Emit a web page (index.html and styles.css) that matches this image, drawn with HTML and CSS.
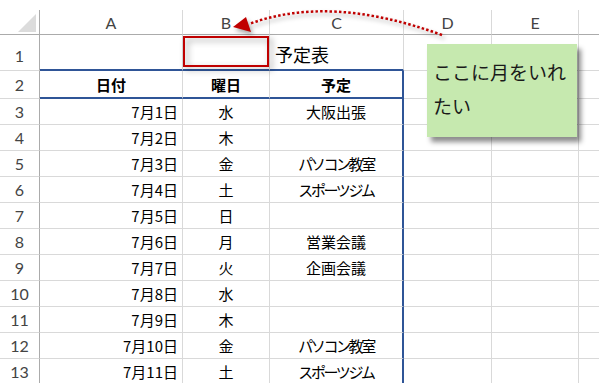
FILE: index.html
```html
<!DOCTYPE html>
<html>
<head>
<meta charset="utf-8">
<title>予定表</title>
<link rel="stylesheet" href="styles.css">
</head>
<body>

<div class="sheet">
  <div class="grid">
    <!-- column letters -->
    <div class="row">
      <div class="cell corner"><span class="tri"></span></div>
      <div class="cell col-head">A</div>
      <div class="cell col-head">B</div>
      <div class="cell col-head">C</div>
      <div class="cell col-head">D</div>
      <div class="cell col-head">E</div>
      <div class="cell col-head last"></div>
    </div>

    <div class="row">
      <div class="cell row-head first">1</div>
      <div class="cell t-top"></div>
      <div class="cell t-top target"><span class="mark"></span></div>
      <div class="cell t-top title">予定表</div>
      <div class="cell"></div>
      <div class="cell"></div>
      <div class="cell last"></div>
    </div>

    <div class="row">
      <div class="cell row-head">2</div>
      <div class="cell t-top head">日付</div>
      <div class="cell t-top head">曜日</div>
      <div class="cell t-top t-right head">予定</div>
      <div class="cell"></div>
      <div class="cell"></div>
      <div class="cell last"></div>
    </div>

    <div class="row">
      <div class="cell row-head">3</div>
      <div class="cell num">7月1日</div>
      <div class="cell mid">水</div>
      <div class="cell mid t-right">大阪出張</div>
      <div class="cell"></div><div class="cell"></div><div class="cell last"></div>
    </div>
    <div class="row">
      <div class="cell row-head">4</div>
      <div class="cell num">7月2日</div>
      <div class="cell mid">木</div>
      <div class="cell mid t-right"></div>
      <div class="cell"></div><div class="cell"></div><div class="cell last"></div>
    </div>
    <div class="row">
      <div class="cell row-head">5</div>
      <div class="cell num">7月3日</div>
      <div class="cell mid">金</div>
      <div class="cell mid t-right kana">パソコン教室</div>
      <div class="cell"></div><div class="cell"></div><div class="cell last"></div>
    </div>
    <div class="row">
      <div class="cell row-head">6</div>
      <div class="cell num">7月4日</div>
      <div class="cell mid">土</div>
      <div class="cell mid t-right kana">スポーツジム</div>
      <div class="cell"></div><div class="cell"></div><div class="cell last"></div>
    </div>
    <div class="row">
      <div class="cell row-head">7</div>
      <div class="cell num">7月5日</div>
      <div class="cell mid">日</div>
      <div class="cell mid t-right"></div>
      <div class="cell"></div><div class="cell"></div><div class="cell last"></div>
    </div>
    <div class="row">
      <div class="cell row-head">8</div>
      <div class="cell num">7月6日</div>
      <div class="cell mid">月</div>
      <div class="cell mid t-right">営業会議</div>
      <div class="cell"></div><div class="cell"></div><div class="cell last"></div>
    </div>
    <div class="row">
      <div class="cell row-head">9</div>
      <div class="cell num">7月7日</div>
      <div class="cell mid">火</div>
      <div class="cell mid t-right">企画会議</div>
      <div class="cell"></div><div class="cell"></div><div class="cell last"></div>
    </div>
    <div class="row">
      <div class="cell row-head">10</div>
      <div class="cell num">7月8日</div>
      <div class="cell mid">水</div>
      <div class="cell mid t-right"></div>
      <div class="cell"></div><div class="cell"></div><div class="cell last"></div>
    </div>
    <div class="row">
      <div class="cell row-head">11</div>
      <div class="cell num">7月9日</div>
      <div class="cell mid">木</div>
      <div class="cell mid t-right"></div>
      <div class="cell"></div><div class="cell"></div><div class="cell last"></div>
    </div>
    <div class="row">
      <div class="cell row-head">12</div>
      <div class="cell num">7月10日</div>
      <div class="cell mid">金</div>
      <div class="cell mid t-right kana">パソコン教室</div>
      <div class="cell"></div><div class="cell"></div><div class="cell last"></div>
    </div>
    <div class="row">
      <div class="cell row-head">13</div>
      <div class="cell num">7月11日</div>
      <div class="cell mid">土</div>
      <div class="cell mid t-right kana">スポーツジム</div>
      <div class="cell"></div><div class="cell"></div><div class="cell last"></div>
    </div>
  </div>

  <!-- dotted arrow from the note to B1 -->
  <svg class="arrow" width="599" height="383" viewBox="0 0 599 383">
    <path d="M442 35 Q330 -6 249 24" fill="none" stroke="#c00000" stroke-width="2.5" stroke-dasharray="2.5 2.2"/>
    <polygon points="233,27 246,17 251,32" fill="#c00000"/>
  </svg>

  <div class="note">ここに月をいれたい</div>
</div>

</body>
</html>
```

FILE: styles.css
```css
body {
  margin: 0;
  background: #ffffff;
  font-family: "Noto Sans CJK JP", sans-serif;
  overflow: hidden;
}

.sheet {
  position: relative;
  width: 599px;
  height: 383px;
  padding-top: 10px;
  box-sizing: border-box;
  overflow: hidden;
}

.grid {
  display: grid;
  grid-template-columns: 40px 143px 87px 134px 88px 87px 20px;
  grid-template-rows: 25px 36px 28px repeat(11, 26px);
}

.row {
  display: contents;
}

.cell {
  box-sizing: border-box;
  display: flex;
  align-items: center;
  padding: 0 4px;
  border-right: 1px solid #d9d9d9;
  border-bottom: 1px solid #d9d9d9;
  font-size: 15px;
  color: #000;
  white-space: nowrap;
  overflow: hidden;
}

.cell.last {
  border-right: none;
}

/* headers */
.corner {
  justify-content: flex-end;
  align-items: flex-end;
  padding: 0 3px 2px 0;
  border-right-color: #ababab;
  border-bottom-color: #ababab;
}

.tri {
  width: 0;
  height: 0;
  border-left: 18px solid transparent;
  border-bottom: 18px solid #dcdcdc;
}

.col-head {
  justify-content: center;
  font-family: Lato, "Liberation Sans", sans-serif;
  font-size: 16px;
  color: #444;
  border-bottom-color: #ababab;
}

.row-head {
  justify-content: center;
  padding: 0;
  font-family: Lato, "Liberation Sans", sans-serif;
  font-size: 16px;
  color: #444;
  border-right-color: #ababab;
}

.row-head.first {
  padding-top: 6px;
}

/* table body */
.num {
  justify-content: flex-end;
  padding-right: 4px;
}

.mid {
  justify-content: center;
}

/* katakana set tighter, like a proportional gothic */
.kana {
  letter-spacing: -2.4px;
}

.head {
  justify-content: center;
  font-weight: bold;
}

.t-top {
  border-bottom: 2px solid #2f5597;
}

.t-right {
  border-right: 2px solid #2f5597;
}

.title {
  font-size: 18px;
  padding-top: 4px;
  padding-left: 5px;
  overflow: visible;
}

.target {
  position: relative;
  overflow: visible;
}

.mark {
  position: absolute;
  left: 0;
  top: 1px;
  width: 86px;
  height: 31px;
  box-sizing: border-box;
  border: 2px solid #c00000;
  filter: drop-shadow(3px 3px 3px rgba(0, 0, 0, 0.4));
}

/* overlays */
.arrow {
  position: absolute;
  left: 0;
  top: 0;
  pointer-events: none;
  filter: drop-shadow(2px 3px 2px rgba(0, 0, 0, 0.35));
}

.note {
  position: absolute;
  left: 427px;
  top: 44px;
  width: 150px;
  height: 93px;
  box-sizing: border-box;
  padding: 11px 6px 0 6px;
  background: #c6e9af;
  box-shadow: 4px 5px 5px rgba(0, 0, 0, 0.45);
  font-size: 19px;
  line-height: 34px;
  color: #1a1a1a;
}
```
